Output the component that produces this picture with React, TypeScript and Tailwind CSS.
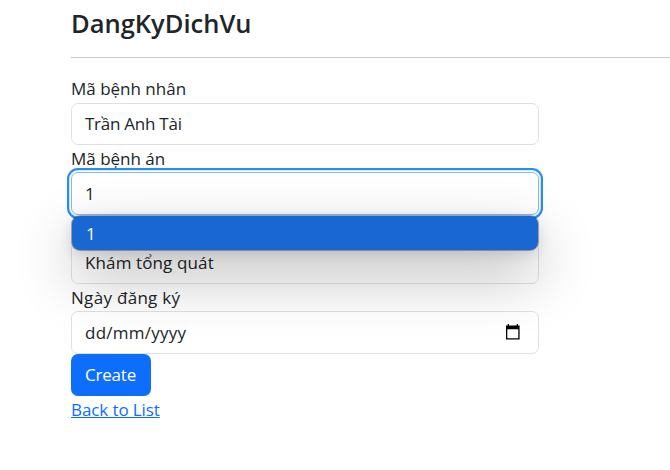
import type { ReactNode } from "react";

function Field({ label, children }: { label?: ReactNode; children: ReactNode }) {
  return (
    <div className="h-[69.4px]">
      <div className="h-[27px] leading-[27px]">{label}</div>
      {children}
    </div>
  );
}

const control =
  "flex w-[468px] items-center rounded-[7px] border border-[#dee2e6] bg-white px-[13px]";

export default function App() {
  return (
    <div className="h-[470px] w-[670px] overflow-hidden bg-white pl-[71px] font-['Open_Sans','Noto_Sans',sans-serif] text-[17px] tracking-[-0.1px] text-[#212529]">
      <h4 className="h-[57px] pt-[7px] text-[25.5px] leading-[32px] font-semibold tracking-[0px]">
        DangKyDichVu
      </h4>
      <hr className="h-px border-0 bg-[#c7c8c9]" />
      <form className="pt-[18px]">
        <Field label={<label className="block leading-[26px] tracking-[0px]">Mã bệnh nhân</label>}>
          <div className={`${control} h-[42px] tracking-[-0.25px]`}>Trần Anh Tài</div>
        </Field>
        <Field label={<label className="tracking-[0px]">Mã bệnh án</label>}>
          <div className="relative">
            <div className="flex h-[43px] w-[468px] items-center rounded-[7px] border border-[#86b7fe] bg-white px-[13px] shadow-[0_0_0_1px_#ffffff,0_0_0_2px_#d3e6ff,0_0_0_4px_#258cfb]">
              1
            </div>
            <div className="absolute top-[43.6px] left-px z-10 flex h-[34.4px] w-[466px] items-center rounded-lg bg-[#1967d2] px-[14px] pt-px text-white shadow-[0_0_0_1px_rgba(0,0,0,0.3),0_4px_14px_rgba(0,0,0,0.14),0_24px_58px_rgba(0,0,0,0.32)]">
              1
            </div>
          </div>
        </Field>
        <Field>
          <div className={`${control} h-[42.5px] tracking-[0.12px]`}>Khám tổng quát</div>
        </Field>
        <Field label={<label className="tracking-[0.3px]">Ngày đăng ký</label>}>
          <div className={`${control} h-[42.5px] justify-between pr-[17px]`}>
            <span className="pt-px tracking-[0.25px]">dd/mm/yyyy</span>
            <svg width="16" height="18" viewBox="0 0 16 18" fill="none">
              <path
                d="M2.7 1h1.3v1.5h7.7V1h1.3v1.5h1.6v14H1v-14h1.7zM2.3 6.3v8.9h11V6.3z"
                fill="#000"
                fillRule="evenodd"
              />
            </svg>
          </div>
        </Field>
        <button
          type="button"
          className="block h-[42px] w-[80px] rounded-[7px] bg-[#0d6efd] pr-px tracking-[-0.2px] text-white"
        >
          Create
        </button>
        <a className="block h-[27px] w-fit leading-[27px] text-[#0d6efd] underline" href="#list">
          Back to List
        </a>
      </form>
    </div>
  );
}
